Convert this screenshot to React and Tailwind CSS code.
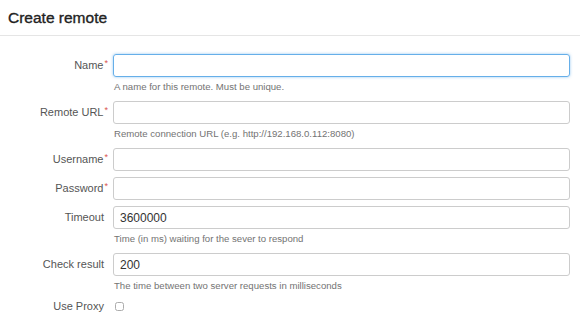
// Create remote form
const Field = ({label, required, value, help, focused}) => {
    return (
        <div className="flex items-start">
            <div className="w-[108px] h-[23px] flex items-center justify-end text-[11px] text-[#555]">
                <span>{label}</span>
                {required && <span className="text-[#d9534f] text-[9px] self-start mt-[3px] ml-[1px]">*</span>}
                {!required && <span className="w-[4px]"></span>}
            </div>
            <div className="flex-1 ml-[5px] mr-[10px] flex flex-col">
                <input
                    type="text"
                    defaultValue={value}
                    className={
                        focused
                            ? "h-[23px] w-full border border-[#66afe9] rounded-[3px] px-[6px] text-[12px] text-[#333] outline-none shadow-[0_0_3px_rgba(102,175,233,0.7)]"
                            : "h-[23px] w-full border border-[#ccc] rounded-[3px] px-[6px] text-[12px] text-[#333] outline-none"
                    }
                />
                {help && <div className="h-[18px] pt-[3px] pl-[1px] text-[9.6px] text-[#737373] leading-[14px]">{help}</div>}
            </div>
        </div>
    );
};

const App = () => {
    return (
        <div className="w-[580px] h-[329px] bg-white overflow-hidden font-['Liberation_Sans',Arial,sans-serif]">
            <div className="h-[36px] border-b border-[#e5e5e5] flex items-center px-[8px]">
                <h1 className="text-[15.5px] font-normal text-[#222] [-webkit-text-stroke:0.35px_#222]">Create remote</h1>
            </div>
            <div className="pt-[18px] flex flex-col gap-[6px]">
                <Field label="Name" required focused help="A name for this remote. Must be unique." />
                <Field label="Remote URL" required help="Remote connection URL (e.g. http://192.168.0.112:8080)" />
                <Field label="Username" required />
                <Field label="Password" required />
                <Field label="Timeout" value="3600000" help="Time (in ms) waiting for the sever to respond" />
                <Field label="Check result" value="200" help="The time between two server requests in milliseconds" />
                <div className="flex items-center h-[12px]">
                    <div className="w-[108px] flex justify-end text-[11px] text-[#555]">
                        <span>Use Proxy</span>
                        <span className="w-[4px]"></span>
                    </div>
                    <input type="checkbox" className="ml-[7px] w-[9px] h-[9px] opacity-60" />
                </div>
            </div>
        </div>
    );
};

export default App;
